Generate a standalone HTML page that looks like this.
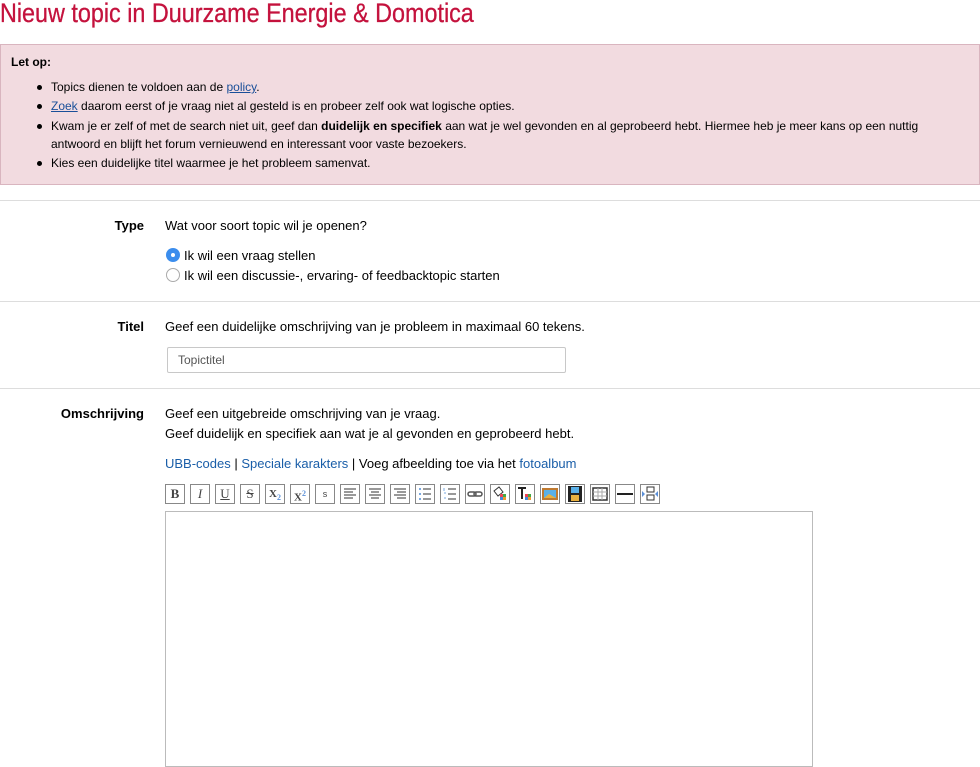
<!DOCTYPE html>
<html><head><meta charset="utf-8"><style>
*{margin:0;padding:0;box-sizing:border-box}
body{width:980px;height:767px;overflow:hidden;background:#fff;font-family:"Liberation Sans",Arial,sans-serif;color:#000;position:relative}
.a{position:absolute;white-space:nowrap}
h1{position:absolute;left:0;top:-2px;font-size:27px;font-weight:normal;color:#c4123d;transform:scaleX(0.865);transform-origin:0 0;white-space:nowrap;letter-spacing:0;-webkit-text-stroke:0.3px #c4123d}
.box{position:absolute;left:0;top:44px;width:980px;height:141px;background:#f2dbe0;border:1px solid #d9b5bf}
.dot{position:absolute;width:5px;height:5px;border-radius:50%;background:#000}
a{color:#1a5ea8}
.u{text-decoration:underline;color:#1a4f99}
.hr{position:absolute;left:0;width:980px;height:1px;background:#ddd}
.lab{position:absolute;right:836px;font-size:13px;font-weight:bold;text-align:right}
.tx{font-size:13px}
.btn{position:absolute;top:484px;width:20px;height:20px;border:1px solid #888;background:#fff;font-family:"Liberation Serif",serif;font-size:13px;text-align:center;line-height:18px;color:#444}
</style></head><body>
<h1>Nieuw topic in Duurzame Energie &amp; Domotica</h1>
<div class="box"></div>
<div class="a t" style="left:11px;top:55px;font-size:12px;font-weight:bold">Let op:</div>
<div class="dot" style="left:37px;top:85px"></div><div class="a" style="left:51px;top:80px;font-size:12px">Topics dienen te voldoen aan de <span class="u">policy</span>.</div>
<div class="dot" style="left:37px;top:104px"></div><div class="a" style="left:51px;top:99px;font-size:12px"><span class="u">Zoek</span> daarom eerst of je vraag niet al gesteld is en probeer zelf ook wat logische opties.</div>
<div class="dot" style="left:37px;top:124px"></div><div class="a" style="left:51px;top:119px;font-size:12px">Kwam je er zelf of met de search niet uit, geef dan <b>duidelijk en specifiek</b> aan wat je wel gevonden en al geprobeerd hebt. Hiermee heb je meer kans op een nuttig</div>
<div class="a" style="left:51px;top:137px;font-size:12px">antwoord en blijft het forum vernieuwend en interessant voor vaste bezoekers.</div>
<div class="dot" style="left:37px;top:161px"></div><div class="a" style="left:51px;top:156px;font-size:12px">Kies een duidelijke titel waarmee je het probleem samenvat.</div>

<div class="hr" style="top:200px"></div>
<div class="lab" style="top:218px">Type</div>
<div class="a tx" style="left:165px;top:218px">Wat voor soort topic wil je openen?</div>
<div class="a" style="left:166px;top:248px;width:14px;height:14px;border-radius:50%;background:#3b8ded"><div style="position:absolute;left:5px;top:5px;width:4px;height:4px;border-radius:50%;background:#fff"></div></div>
<div class="a tx" style="left:184px;top:248px">Ik wil een vraag stellen</div>
<div class="a" style="left:166px;top:268px;width:14px;height:14px;border-radius:50%;border:1px solid #aaa;background:#fff"></div>
<div class="a tx" style="left:184px;top:268px">Ik wil een discussie-, ervaring- of feedbacktopic starten</div>

<div class="hr" style="top:301px"></div>
<div class="lab" style="top:319px">Titel</div>
<div class="a tx" style="left:165px;top:319px">Geef een duidelijke omschrijving van je probleem in maximaal 60 tekens.</div>
<div class="a" style="left:167px;top:347px;width:399px;height:26px;border:1px solid #c8c8c8;border-radius:2px"></div>
<div class="a" style="left:178px;top:353px;font-size:12px;color:#555">Topictitel</div>

<div class="hr" style="top:388px"></div>
<div class="lab" style="top:406px">Omschrijving</div>
<div class="a tx" style="left:165px;top:406px">Geef een uitgebreide omschrijving van je vraag.</div>
<div class="a tx" style="left:165px;top:426px">Geef duidelijk en specifiek aan wat je al gevonden en geprobeerd hebt.</div>
<div class="a tx" style="left:165px;top:456px"><a style="text-decoration:none">UBB-codes</a> | <a style="text-decoration:none">Speciale karakters</a> | Voeg afbeelding toe via het <a style="text-decoration:none">fotoalbum</a></div>

<div class="btn" style="left:165px;font-weight:bold">B</div>
<div class="btn" style="left:190px;font-style:italic">I</div>
<div class="btn" style="left:215px;text-decoration:underline">U</div>
<div class="btn" style="left:240px;text-decoration:line-through">S</div>
<div class="btn" style="left:265px;font-weight:bold;font-size:11px">X<sub style="font-size:8px;color:#5a8fd8">2</sub></div>
<div class="btn" style="left:290px;font-weight:bold;font-size:11px">X<sup style="font-size:8px;color:#5a8fd8">2</sup></div>
<div class="btn" style="left:315px;font-size:9px;font-family:'Liberation Sans'">s</div>
<div class="btn" style="left:340px"><svg width="18" height="18"><path d="M3 4h12M3 7h9M3 10h12M3 13h9" stroke="#333"/></svg></div>
<div class="btn" style="left:365px"><svg width="18" height="18"><path d="M3 4h12M5 7h8M3 10h12M5 13h8" stroke="#333"/></svg></div>
<div class="btn" style="left:390px"><svg width="18" height="18"><path d="M3 4h12M6 7h9M3 10h12M6 13h9" stroke="#333"/></svg></div>
<div class="btn" style="left:415px"><svg width="18" height="18"><path d="M3 4h2M3 9h2M3 14h2" stroke="#7aa8e0" stroke-width="2"/><path d="M7 4h8M7 9h8M7 14h8" stroke="#333"/></svg></div>
<div class="btn" style="left:440px"><svg width="18" height="18"><path d="M3 3v3M3 8h2M3 13h2" stroke="#7aa8e0"/><path d="M7 4h8M7 9h8M7 14h8" stroke="#333"/></svg></div>
<div class="btn" style="left:465px"><svg width="18" height="18"><rect x="2" y="7" width="8" height="4" rx="2" fill="none" stroke="#555" stroke-width="1.5"/><rect x="8" y="7" width="8" height="4" rx="2" fill="none" stroke="#555" stroke-width="1.5"/></svg></div>
<div class="btn" style="left:490px"><svg width="18" height="18"><path d="M3 6l5-4 4 5-5 4z" fill="#fff" stroke="#333"/><rect x="9" y="9" width="3" height="3" fill="#e45"/><rect x="12" y="9" width="3" height="3" fill="#4a4"/><rect x="9" y="12" width="3" height="3" fill="#48d"/><rect x="12" y="12" width="3" height="3" fill="#e93"/></svg></div>
<div class="btn" style="left:515px"><svg width="18" height="18"><path d="M2 3h8M6 3v11" stroke="#222" stroke-width="2"/><rect x="9" y="9" width="3" height="3" fill="#e45"/><rect x="12" y="9" width="3" height="3" fill="#4a4"/><rect x="9" y="12" width="3" height="3" fill="#48d"/><rect x="12" y="12" width="3" height="3" fill="#e93"/></svg></div>
<div class="btn" style="left:540px"><svg width="18" height="18"><rect x="1" y="3" width="16" height="12" fill="#c07a30"/><rect x="3" y="5" width="12" height="8" fill="#5ab0e8"/><path d="M3 13l5-4 7 4z" fill="#e8b040"/></svg></div>
<div class="btn" style="left:565px"><svg width="18" height="18"><rect x="2" y="1" width="14" height="16" fill="#222"/><rect x="5" y="2" width="8" height="6" fill="#5ab0e8"/><rect x="5" y="10" width="8" height="6" fill="#e8b040"/></svg></div>
<div class="btn" style="left:590px"><svg width="18" height="18"><rect x="2" y="3" width="14" height="12" fill="#fff" stroke="#333" stroke-width="1.5"/><path d="M2 7h14M2 11h14M7 3v12M11 3v12" stroke="#aaa"/></svg></div>
<div class="btn" style="left:615px"><svg width="18" height="18"><path d="M1 9h16" stroke="#222" stroke-width="2"/></svg></div>
<div class="btn" style="left:640px"><svg width="18" height="18"><rect x="6" y="2" width="7" height="5" fill="none" stroke="#333"/><rect x="6" y="10" width="7" height="5" fill="none" stroke="#333"/><path d="M1 6l3 3-3 3zM17 6l-3 3 3 3z" fill="#5a8fd8"/></svg></div>

<div class="a" style="left:165px;top:511px;width:648px;height:256px;border:1px solid #bbb"></div>
</body></html>
